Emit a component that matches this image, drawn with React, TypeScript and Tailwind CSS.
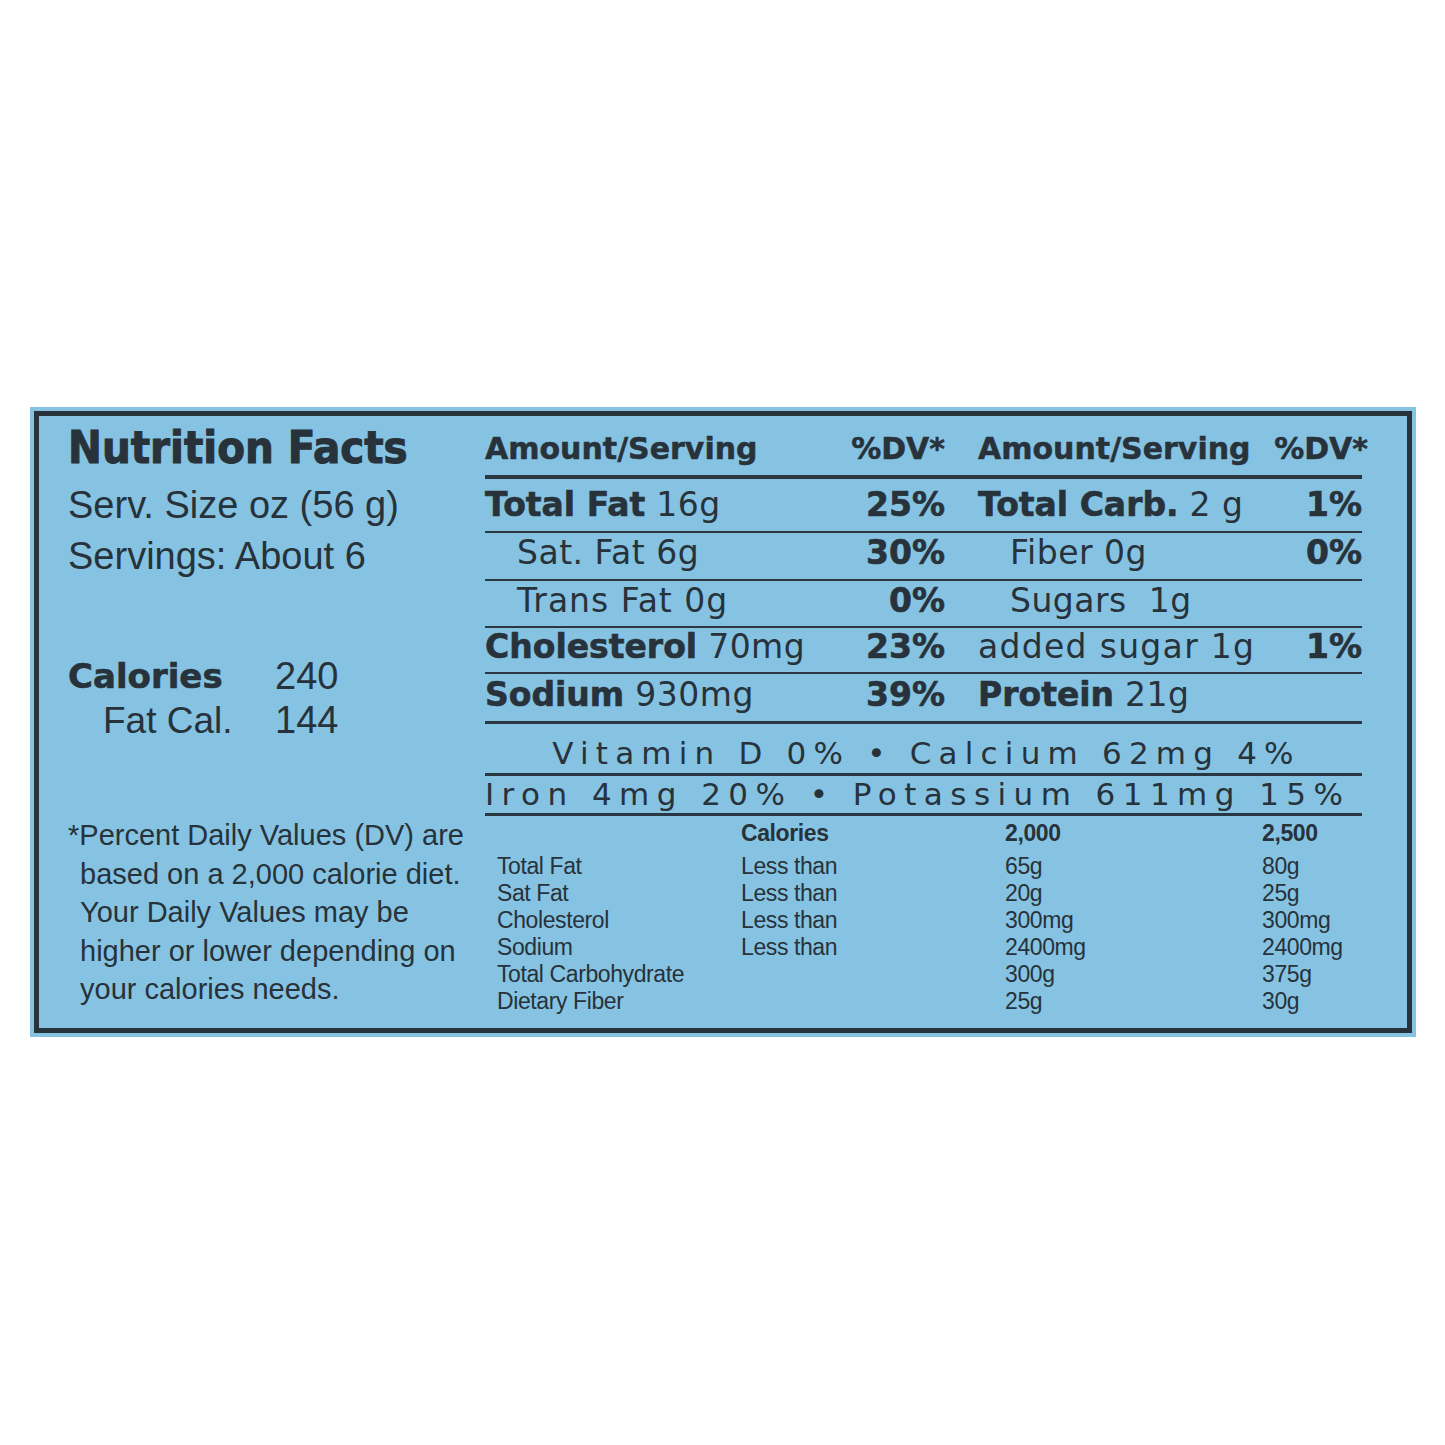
import React from "react";

const DJ = "font-['DejaVu_Sans',sans-serif]";
const LB = "font-['Liberation_Sans',Arial,sans-serif]";

type Half = {
  label: string;
  amount?: string;
  dv?: string;
  bold?: boolean;
  indent?: boolean;
  extra?: string;
};

function Cell({ h, w }: { h: Half; w: string }) {
  return (
    <div className={`flex items-center justify-between ${w}`}>
      <div className={`whitespace-pre text-[33px] leading-none ${h.indent ? "pl-[32px]" : ""}`}>
        <span className={`${DJ} ${h.bold ? "font-bold [-webkit-text-stroke:0.6px]" : "tracking-[0.5px]"} ${h.extra ?? ""}`}>{h.label}</span>
        {h.amount ? (
          <span className={`${DJ} tracking-[0.5px] ${h.extra ?? ""}`}>{h.amount}</span>
        ) : null}
      </div>
      {h.dv ? <div className={`${DJ} font-bold [-webkit-text-stroke:0.6px] text-[33px] leading-none`}>{h.dv}</div> : null}
    </div>
  );
}

const rows: { l: Half; r: Half; cls: string }[] = [
  {
    l: { label: "Total Fat", amount: " 16g", dv: "25%", bold: true },
    r: { label: "Total Carb.", amount: " 2 g", dv: "1%", bold: true },
    cls: "h-[54px] border-b-2 pb-[2px]",
  },
  {
    l: { label: "Sat. Fat 6g", dv: "30%", indent: true },
    r: { label: "Fiber 0g", dv: "0%", indent: true },
    cls: "h-[48px] border-b-2 pb-[8px]",
  },
  {
    l: { label: "Trans Fat 0g", dv: "0%", indent: true, extra: "tracking-[1px]" },
    r: { label: "Sugars  1g", indent: true },
    cls: "h-[47px] border-b-2 pb-[7px]",
  },
  {
    l: { label: "Cholesterol", amount: " 70mg", dv: "23%", bold: true },
    r: { label: "added sugar 1g", dv: "1%", extra: "tracking-[1.3px]" },
    cls: "h-[46px] border-b-2 pb-[8px]",
  },
  {
    l: { label: "Sodium", amount: " 930mg", dv: "39%", bold: true },
    r: { label: "Protein", amount: " 21g", bold: true },
    cls: "h-[50px] border-b-[3px] pb-[7px]",
  },
];

const dvTable: [string, string, string, string][] = [
  ["Total Fat", "Less than", "65g", "80g"],
  ["Sat Fat", "Less than", "20g", "25g"],
  ["Cholesterol", "Less than", "300mg", "300mg"],
  ["Sodium", "Less than", "2400mg", "2400mg"],
  ["Total Carbohydrate", "", "300g", "375g"],
  ["Dietary Fiber", "", "25g", "30g"],
];

export default function App() {
  return (
    <div className="w-[1445px] h-[1445px] bg-white pt-[407px] pl-[30px]">
      <div className="w-[1386px] h-[630px] bg-[#86c3e2] p-[4px]">
        <div className="h-full border-[5px] border-[#27323b] flex text-[#27323a]">
          {/* Left column */}
          <div className="w-[446px] shrink-0 pl-[29px] flex flex-col">
            <div className="mt-[4px] h-[56px] leading-[56px] text-[45px] font-bold whitespace-nowrap font-['DejaVu_Sans_Condensed','DejaVu_Sans',sans-serif] [font-stretch:condensed] [-webkit-text-stroke:1px]">
              Nutrition Facts
            </div>
            <div className={`mt-[4px] h-[51px] leading-[51px] text-[38px] whitespace-nowrap ${LB}`}>
              Serv. Size oz (56 g)
            </div>
            <div className={`h-[51px] leading-[51px] text-[38px] whitespace-nowrap ${LB}`}>
              Servings: About 6
            </div>
            <div className="mt-[70px] h-[48px] flex items-center">
              <div className={`w-[207px] ${DJ} font-bold [-webkit-text-stroke:0.6px] text-[34px] leading-none`}>Calories</div>
              <div className={`${LB} text-[38px] leading-none`}>240</div>
            </div>
            <div className="h-[40px] flex items-center">
              <div className={`w-[207px] pl-[35px] ${LB} text-[37px] leading-none`}>Fat Cal.</div>
              <div className={`${LB} text-[38px] leading-none`}>144</div>
            </div>
            <div className={`mt-[76px] ${LB} text-[29px] leading-[38.5px] whitespace-nowrap`}>
              <div>*Percent Daily Values (DV) are</div>
              <div className="pl-[12px]">based on a 2,000 calorie diet.</div>
              <div className="pl-[12px]">Your Daily Values may be</div>
              <div className="pl-[12px]">higher or lower depending on</div>
              <div className="pl-[12px]">your calories needs.</div>
            </div>
          </div>

          {/* Right part */}
          <div className="w-[877px] shrink-0 flex flex-col">
            <div className="h-[63px] pt-[7px] border-b-4 border-[#2a3743] flex items-center">
              <div className={`w-[460px] flex justify-between ${DJ} font-bold [-webkit-text-stroke:0.5px] text-[30px] leading-none`}>
                <span>Amount/Serving</span>
                <span>%DV*</span>
              </div>
              <div className="w-[33px]" />
              <div className={`w-[384px] flex justify-between ${DJ} font-bold [-webkit-text-stroke:0.5px] text-[30px] leading-none`}>
                <span>Amount/Serving</span>
                <span className="mr-[-6px]">%DV*</span>
              </div>
            </div>

            {rows.map((r, i) => (
              <div key={i} className={`flex items-center border-[#2a3743] ${r.cls}`}>
                <Cell h={r.l} w="w-[460px]" />
                <div className="w-[33px]" />
                <Cell h={r.r} w="w-[384px]" />
              </div>
            ))}

            <div className={`h-[52px] pt-[9px] pl-[6px] border-b-[3px] border-[#2a3743] flex items-center justify-center ${DJ} text-[31px] leading-none tracking-[7.2px] whitespace-nowrap`}>
              Vitamin D 0% • Calcium 62mg 4%
            </div>
            <div className={`h-[40px] border-b-[3px] border-[#2a3743] flex items-center ${DJ} text-[31px] leading-none tracking-[7.45px] whitespace-nowrap`}>
              Iron 4mg 20% • Potassium 611mg 15%
            </div>

            <div className={`pl-[12px] ${LB} text-[23px] tracking-[-0.4px]`}>
              <div className="h-[37px] pb-[3px] grid grid-cols-[244px_264px_257px_1fr] items-center font-bold leading-none">
                <span />
                <span>Calories</span>
                <span>2,000</span>
                <span>2,500</span>
              </div>
              {dvTable.map((row, i) => (
                <div key={i} className="h-[27px] grid grid-cols-[244px_264px_257px_1fr] items-center leading-none">
                  {row.map((c, j) => (
                    <span key={j}>{c}</span>
                  ))}
                </div>
              ))}
            </div>
          </div>
        </div>
      </div>
    </div>
  );
}
